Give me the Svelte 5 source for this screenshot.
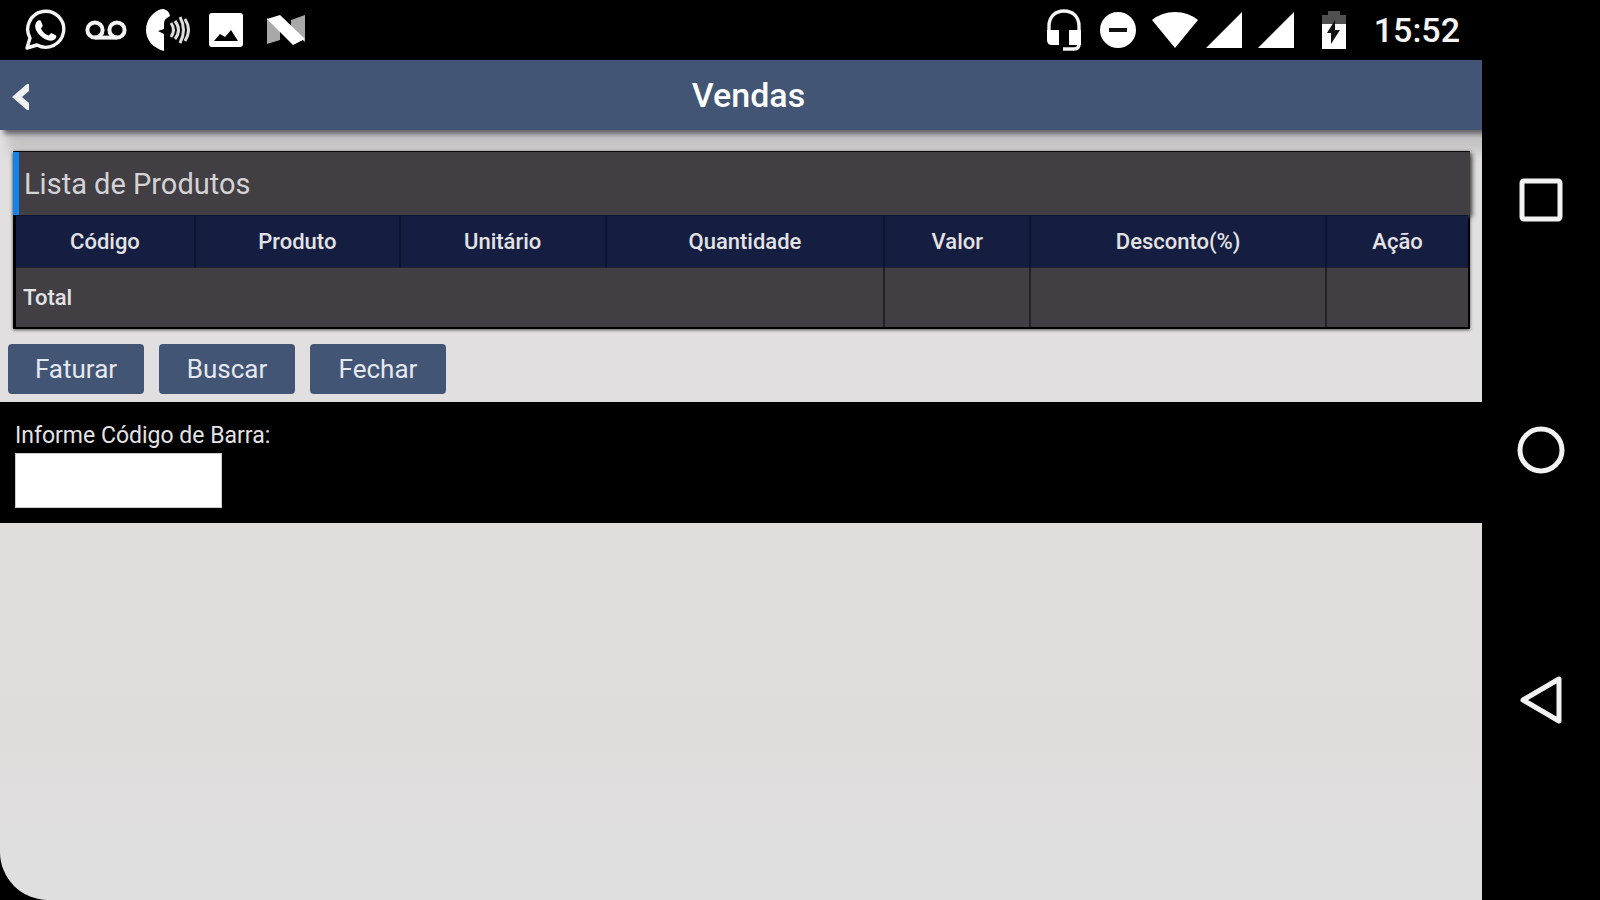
<script>
  const columns = [
    { name: 'Código', share: 180 },
    { name: 'Produto', share: 205 },
    { name: 'Unitário', share: 206 },
    { name: 'Quantidade', share: 279 },
    { name: 'Valor', share: 146 },
    { name: 'Desconto(%)', share: 296 },
    { name: 'Ação', share: 142 }
  ];
  const total = columns.reduce((sum, c) => sum + c.share, 0);
  const actions = ['Faturar', 'Buscar', 'Fechar'];
  let barcode = $state('');
</script>

<div class="screen">
  <div class="main">
    <div class="status">
      <div class="notices">
        <svg width="42" height="42" viewBox="0 0 42 42" fill="none">
          <path d="M3 39l3-10A18 18 0 1 1 13 36z" stroke="#f4f4f4" stroke-width="3.4" stroke-linejoin="round" />
          <path d="M12.500 13c2-2.500 4-2 4.600-.5l1.600 4c.3 1-1.700 2.500-1.700 3 1.500 3.500 4.500 6 7.500 7 .8 0 2-2.700 3-2.300l4.300 2c1.200.8.2 3.700-2 4.800-4 2-9.500-.4-13.500-4.200-4-4-7-9.500-3.800-13.800z" fill="#fff" />
        </svg>
        <svg width="42" height="20" viewBox="0 0 42 20" fill="none" stroke="#f4f4f4" stroke-width="4">
          <circle cx="10" cy="10" r="7.600" />
          <circle cx="32" cy="10" r="7.600" />
          <path d="M10 17.600h22" />
        </svg>
        <svg width="44" height="42" viewBox="0 0 44 42" fill="none">
          <path d="M18 42C7 39 0 31 0 21S7 2 16 0c4 0 7 2 8 7l-3 2c-2 1-3 3-3 6v5l-6 2 6 3z" fill="#fff" />
          <path d="M25 14q5 7 0 14M29 12q7 9 0 18M34 8q7 13 0 26M39 10q7 11 0 22" stroke="#ddd" stroke-width="3" />
        </svg>
        <svg width="34" height="34" viewBox="0 0 34 34">
          <path fill="#fff" fill-rule="evenodd" d="M3 0h28q3 0 3 3v28q0 3-3 3H3q-3 0-3-3V3q0-3 3-3zM5 28h24l-7-11-6 7-5-3z" />
        </svg>
        <svg class="n" width="38" height="30" viewBox="0 0 38 30">
          <path fill="#a8a8a8" d="M0 3l13 9v13L0 29zM38 0v27L24 16V5z" />
          <path fill="#fff" d="M0 4l13-4 25 24-12 6z" />
        </svg>
      </div>
      <div class="system">
        <svg class="headset" width="34" height="42" viewBox="0 0 34 42">
          <path fill="none" stroke="#f4f4f4" stroke-width="3.400" d="M2 23V17C2 8 8 2 17 2s15 6 15 15v18q0 5-5 5H16" />
          <path fill="#fff" d="M0 21h12v15H5q-5 0-5-5zM22 21h12v15H22z" />
        </svg>
        <svg class="quiet" width="36" height="36" viewBox="0 0 36 36">
          <circle cx="18" cy="18" r="18" fill="#fff" />
          <path d="M9 18h18" stroke="#111" stroke-width="4" />
        </svg>
        <svg class="wifi" width="46" height="36" viewBox="0 0 46 36">
          <path fill="#fff" d="M0 8Q10 0 23 0t23 8L23 36z" />
        </svg>
        <svg class="signal" width="36" height="36" viewBox="0 0 36 36"><path fill="#fff" d="M36 0v36H0z" /></svg>
        <svg class="signal" width="36" height="36" viewBox="0 0 36 36"><path fill="#fff" d="M36 0v36H0z" /></svg>
        <svg class="battery" width="24" height="38" viewBox="0 0 24 38">
          <path fill="#505050" d="M0 4h6V0h12v4h6v10H0z" />
          <path fill="#fff" d="M0 13h24v25H0z" />
          <path fill="#111" d="M13 9v10h5L9 33V22H5z" />
        </svg>
        <time>15:52</time>
      </div>
    </div>

    <header>
      <button class="back" aria-label="Voltar">
        <svg width="18" height="26" viewBox="0 0 18 26"><path fill="#f0f0f0" d="M15 0h2v7l-7 6 7 6v7h-2L0 13z" /></svg>
      </button>
      <h1>Vendas</h1>
    </header>

    <section class="products">
      <div class="card">
        <h2>Lista de Produtos</h2>
        <table>
          <colgroup>
            {#each columns as c}<col style="width: {(c.share / total) * 100}%" />{/each}
          </colgroup>
          <thead>
            <tr>{#each columns as c}<th scope="col">{c.name}</th>{/each}</tr>
          </thead>
          <tbody>
            <tr><td colspan="4">Total</td><td></td><td></td><td></td></tr>
          </tbody>
        </table>
      </div>
      <div class="actions">
        {#each actions as a}<button>{a}</button>{/each}
      </div>
    </section>

    <section class="scan">
      <label for="barcode">Informe Código de Barra:</label>
      <input id="barcode" type="text" bind:value={barcode} />
    </section>

    <div class="rest"></div>
  </div>

  <nav>
    <button aria-label="Recentes">
      <svg width="48" height="50" viewBox="0 0 48 50"><rect x="5" y="6" width="38" height="38" rx="2" /></svg>
    </button>
    <button aria-label="Início">
      <svg width="48" height="50" viewBox="0 0 48 50"><circle cx="24" cy="25" r="21" /></svg>
    </button>
    <button aria-label="Retornar">
      <svg width="48" height="50" viewBox="0 0 48 50"><path d="M42 4v42L6 25z" /></svg>
    </button>
  </nav>
</div>

<style>
  :global(body) {
    margin: 0;
    background: #000;
  }
  .screen {
    display: grid;
    grid-template-columns: 1fr 118px;
    min-height: 100vh;
    background: #000;
    color: #e4e2e4;
    font-family: Roboto, 'Noto Sans', sans-serif;
  }
  .main {
    display: flex;
    flex-direction: column;
    min-width: 0;
  }
  .status {
    display: flex;
    justify-content: space-between;
    height: 60px;
    padding: 0 22px 0 24px;
  }
  .notices,
  .system {
    display: flex;
    align-items: center;
  }
  .notices {
    gap: 19px;
  }
  .n {
    margin-left: 5px;
  }
  .quiet {
    margin-left: 19px;
  }
  .wifi {
    margin-left: 16px;
  }
  .signal {
    margin-left: 8px;
  }
  .signal + .signal {
    margin-left: 16px;
  }
  .battery {
    margin-left: 28px;
  }
  time {
    margin-left: 28px;
    color: #f4f4f4;
    font-size: 34px;
    font-weight: 500;
    line-height: 62px;
  }
  header {
    position: relative;
    display: grid;
    grid-template-columns: 60px 1fr 45px;
    align-items: center;
    height: 70px;
    background: #425575;
    box-shadow: 4px 4px 5px #66626a, 8px 22px 10px #c6c4c5;
    clip-path: inset(0 0 -40px 0);
  }
  button {
    border: 0;
    font-family: inherit;
    cursor: pointer;
  }
  .back {
    display: flex;
    padding: 4px 12px 0;
    background: none;
  }
  h1 {
    margin: 0;
    color: #fff;
    font-size: 34px;
    font-weight: 500;
    line-height: 68px;
    text-align: center;
  }
  .products {
    padding: 21px 12px 8px 8px;
    background: #e1dfdf;
  }
  .card {
    position: relative;
    margin-left: 5px;
    border: 1px solid #000;
    border-width: 1px 2px 2px 1px;
    background: #000;
    box-shadow: 0 1px 3px #555;
  }
  h2 {
    margin: 0 -2px 0 -1px;
    padding: 1px 0 0 5px;
    border-left: 6px solid #1484ec;
    background: #413f43;
    box-shadow: 2px 2px 5px #444;
    color: #d4d2d4;
    font-size: 29px;
    font-weight: 400;
    line-height: 62px;
  }
  table {
    position: relative;
    width: 100%;
    border-collapse: collapse;
    table-layout: fixed;
    border-left: 2px solid #000;
    font-size: 22px;
    line-height: 28px;
  }
  th,
  td {
    padding: 0 7px;
    border: 2px solid #242229;
    border-width: 1px 0 0 2px;
  }
  th {
    height: 51px;
    border-color: #0e1530;
    background: #151e40;
    font-weight: 500;
    text-align: center;
  }
  td {
    height: 59px;
    background: #413f43;
    font-weight: 500;
  }
  th:first-child,
  td:first-child {
    border-left-color: #000;
  }
  .actions {
    display: flex;
    gap: 15px;
    margin-top: 15px;
  }
  .actions button {
    width: 136px;
    height: 50px;
    padding: 0;
    border-radius: 4px;
    background: #425575;
    color: #e4e8ee;
    font-size: 26px;
  }
  .scan {
    display: flex;
    flex-direction: column;
    align-items: flex-start;
    gap: 3px;
    padding: 20px 15px 15px;
  }
  .scan label {
    font-size: 23px;
    line-height: 28px;
  }
  .scan input {
    box-sizing: border-box;
    width: 207px;
    height: 55px;
    padding: 0 8px;
    border: 1px solid #ccc;
    background: #fff;
    font: inherit;
    font-size: 23px;
  }
  .rest {
    flex: 1;
    border-bottom-left-radius: 48px;
    background: linear-gradient(#e1dddd, #e1dcdc 60%, #e0dfe0 80%);
  }
  nav {
    display: flex;
    flex-direction: column;
    padding: 75px 0;
  }
  nav button {
    display: flex;
    flex: 1;
    align-items: center;
    justify-content: center;
    padding: 0;
    background: none;
  }
  nav svg {
    fill: none;
    stroke: #f2f2f2;
    stroke-width: 5px;
    stroke-linejoin: round;
  }
</style>
